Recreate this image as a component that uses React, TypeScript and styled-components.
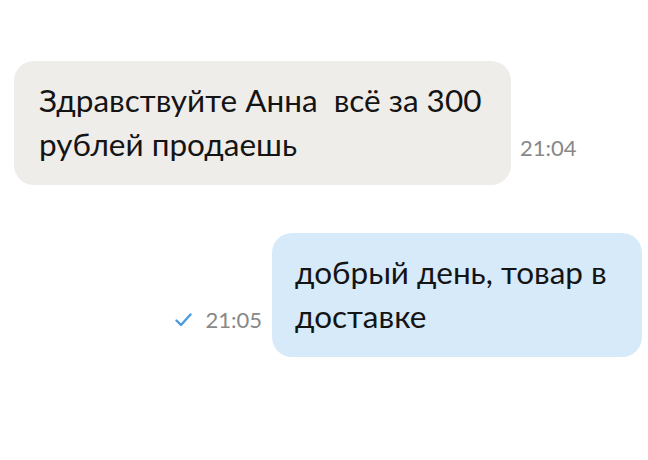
import React from "react";
import styled, { createGlobalStyle } from "styled-components";

const Global = createGlobalStyle`
  html, body { margin: 0; padding: 0; background: #ffffff; }
  body { font-family: Lato, "Noto Sans", sans-serif; }
`;

const Page = styled.div`
  width: 648px;
  height: 460px;
  box-sizing: border-box;
  padding: 61px 6px 0 14px;
  display: flex;
  flex-direction: column;
  gap: 48px;
  background: #fff;
`;

const Row = styled.div<{ $out?: boolean }>`
  display: flex;
  align-items: flex-end;
  justify-content: ${(p) => (p.$out ? "flex-end" : "flex-start")};
  gap: ${(p) => (p.$out ? "10px" : "9px")};
`;

const Bubble = styled.div<{ $out?: boolean; $w: number }>`
  box-sizing: border-box;
  width: ${(p) => p.$w}px;
  height: 124px;
  padding: ${(p) => (p.$out ? "17px 16px 17px 23px" : "17px 16px 17px 25px")};
  border-radius: 20px;
  background: ${(p) => (p.$out ? "#d6eafa" : "#efedea")};
  color: #141414;
  font-size: 31.5px;
  line-height: 44px;
  white-space: pre-wrap;
`;

const Meta = styled.div`
  display: flex;
  align-items: center;
  gap: 13px;
  margin-bottom: 25px;
  color: #888888;
  font-size: 22px;
  line-height: 24px;
`;

const Check = styled.svg`
  width: 17px;
  height: 14px;
  display: block;
`;

export default function App() {
  return (
    <>
      <Global />
      <Page>
        <Row>
          <Bubble $w={497}>{"Здравствуйте Анна  всё за 300 рублей продаешь"}</Bubble>
          <Meta>21:04</Meta>
        </Row>
        <Row $out>
          <Meta>
            <Check viewBox="0 0 17 14">
              <path
                d="M1.5 7.5 L6 12 L15.5 1.5"
                fill="none"
                stroke="#4a9be0"
                strokeWidth="2.4"
                strokeLinecap="round"
                strokeLinejoin="round"
              />
            </Check>
            21:05
          </Meta>
          <Bubble $out $w={370}>{"добрый день, товар в доставке"}</Bubble>
        </Row>
      </Page>
    </>
  );
}
